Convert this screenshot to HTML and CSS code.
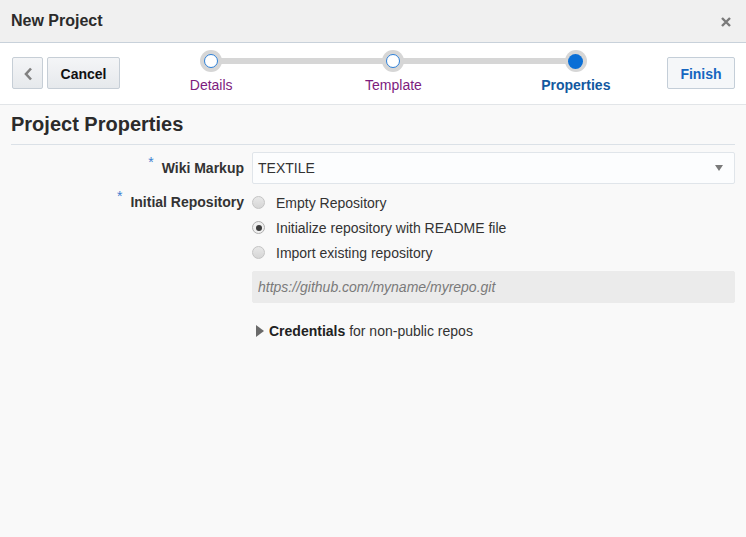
FILE: index.html
```html
<!DOCTYPE html>
<html lang="en">
<head>
<meta charset="utf-8">
<title>New Project</title>
<link rel="stylesheet" href="styles.css">
</head>
<body>
<div class="dialog">
  <header class="titlebar">
    <h1 class="title">New Project</h1>
    <button class="close" aria-label="Close">
      <svg width="10" height="10" viewBox="0 0 10 10"><path d="M1 1L9 9M9 1L1 9" stroke="#7a7a7a" stroke-width="2.4" stroke-linecap="butt"/></svg>
    </button>
  </header>

  <div class="toolbar">
    <div class="nav-left">
      <button class="btn btn-back" aria-label="Back">
        <svg width="10" height="14" viewBox="0 0 10 14"><path d="M8 1.5L3 7l5 5.5" fill="none" stroke="#808080" stroke-width="2.6"/></svg>
      </button>
      <button class="btn btn-cancel">Cancel</button>
    </div>
    <ol class="stepper">
      <li class="step"><span class="dot"><span class="inner"></span></span><span class="step-label">Details</span></li>
      <li class="step"><span class="dot"><span class="inner"></span></span><span class="step-label">Template</span></li>
      <li class="step active"><span class="dot"><span class="inner"></span></span><span class="step-label">Properties</span></li>
    </ol>
    <button class="btn btn-finish">Finish</button>
  </div>

  <main class="content">
    <h2 class="section-title">Project Properties</h2>
    <div class="form">
      <div class="form-row row-center">
        <label class="form-label"><span class="req">*</span>Wiki Markup</label>
        <div class="field">
          <div class="select"><span class="select-value">TEXTILE</span><span class="caret"></span></div>
        </div>
      </div>
      <div class="form-row row-top">
        <label class="form-label label-radio"><span class="req">*</span>Initial Repository</label>
        <div class="field">
          <label class="radio-row"><input type="radio" name="repo" class="radio"><span>Empty Repository</span></label>
          <label class="radio-row"><input type="radio" name="repo" class="radio" checked><span>Initialize repository with README file</span></label>
          <label class="radio-row"><input type="radio" name="repo" class="radio"><span>Import existing repository</span></label>
          <input class="url-input" type="text" placeholder="https://github.com/myname/myrepo.git">
          <div class="disclosure"><span class="tri"></span><span><b>Credentials</b> for non-public repos</span></div>
        </div>
      </div>
    </div>
  </main>
</div>
</body>
</html>
```

FILE: styles.css
```css
* { box-sizing: border-box; }
html, body { margin: 0; padding: 0; }
body {
  background: #f9f9f9;
  font-family: "Liberation Sans", Arial, sans-serif;
  font-size: 14px;
  color: #333;
  width: 746px;
  height: 537px;
  overflow: hidden;
}
.titlebar {
  height: 43px;
  background: #f0f0f0;
  border-bottom: 1px solid #c8d1da;
  display: flex;
  align-items: center;
  justify-content: space-between;
  padding: 0 15px 1px 11px;
}
.title {
  margin: 0;
  font-size: 16px;
  font-weight: bold;
  color: #2b2b2b;
}
.close {
  border: 0;
  background: none;
  padding: 0;
  width: 10px;
  height: 10px;
  display: flex;
  margin-top: 2px;
}
.toolbar {
  height: 62px;
  background: #fff;
  border-bottom: 1px solid #e2e5e8;
  display: flex;
  align-items: flex-start;
  padding: 0 11px 0 12px;
}
.nav-left {
  display: flex;
  gap: 4px;
  margin-top: 14px;
}
.btn {
  height: 32px;
  border: 1px solid #c6ced6;
  border-radius: 2px;
  background: linear-gradient(#f4f5f7, #e6e9ec);
  font-family: "Liberation Sans", Arial, sans-serif;
  font-size: 14px;
  font-weight: bold;
  color: #111;
  padding: 2px 0 0;
  display: flex;
  align-items: center;
  justify-content: center;
}
.btn-back { width: 31px; padding-left: 1px; }
.btn-cancel { width: 73px; }
.btn-finish {
  width: 68px;
  margin-top: 14px;
  color: #1666c0;
  background: #f5f7f9;
  border-color: #c4ced8;
}
.stepper {
  flex: 1;
  list-style: none;
  margin: 0;
  padding: 0;
  display: grid;
  grid-template-columns: repeat(3, 1fr);
  position: relative;
  height: 61px;
}
.stepper::before {
  content: "";
  position: absolute;
  left: 16.667%;
  right: 16.667%;
  top: 15px;
  height: 6px;
  background: #d6d6d6;
}
.step {
  display: flex;
  flex-direction: column;
  align-items: center;
  position: relative;
}
.dot {
  margin-top: 7px;
  width: 22px;
  height: 22px;
  border-radius: 50%;
  background: #d6d6d6;
  display: flex;
  align-items: center;
  justify-content: center;
}
.inner {
  width: 14px;
  height: 14px;
  border-radius: 50%;
  background: #fff;
  border: 1.5px solid #2d80d8;
}
.active .inner {
  width: 15px;
  height: 15px;
  background: #0b6fd6;
  border: 0;
}
.step-label {
  margin-top: 5px;
  line-height: 16px;
  color: #7d1b7e;
}
.active .step-label {
  color: #12589f;
  font-weight: bold;
}
.content {
  padding: 0 11px;
}
.section-title {
  margin: 0;
  padding: 7px 0 8px;
  font-size: 20px;
  line-height: 24px;
  font-weight: bold;
  color: #2b2b2b;
  border-bottom: 1px solid #dbe1e7;
}
.form {
  padding-top: 7px;
}
.form-row {
  display: flex;
  gap: 8px;
}
.row-center { align-items: center; }
.row-top { align-items: flex-start; margin-top: 6px; }
.form-label {
  width: 233px;
  flex: none;
  text-align: right;
  font-weight: bold;
  color: #333;
  line-height: 18px;
}
.label-radio { line-height: 25px; }
.req {
  color: #3d80d0;
  font-weight: normal;
  line-height: 0;
  vertical-align: 6px;
  margin-right: 8px;
}
.field { flex: 1; }
.select {
  height: 32px;
  background: #fcfdfe;
  border: 1px solid #e0e5ea;
  border-radius: 2px;
  display: flex;
  align-items: center;
  justify-content: space-between;
  padding: 0 11px 0 5px;
  color: #333;
}
.caret {
  width: 0;
  height: 0;
  border-left: 4.5px solid transparent;
  border-right: 4.5px solid transparent;
  border-top: 6px solid #7a7a7a;
}
.radio-row {
  display: flex;
  align-items: center;
  height: 25px;
  gap: 11px;
}
.radio {
  -webkit-appearance: none;
  appearance: none;
  margin: 0;
  width: 13px;
  height: 13px;
  border-radius: 50%;
  border: 1px solid #c4c4c4;
  background: linear-gradient(#e8e8e8, #d6d6d6);
  display: inline-flex;
  align-items: center;
  justify-content: center;
}
.radio:checked {
  background: #f0f0f0;
  border-color: #b0b0b0;
}
.radio:checked::after {
  content: "";
  width: 6px;
  height: 6px;
  border-radius: 50%;
  background: #3c3c3c;
}
.url-input {
  display: block;
  width: 100%;
  height: 32px;
  margin-top: 6px;
  border: 1px solid #ebebeb;
  background: #ebebeb;
  border-radius: 2px;
  padding: 0 5px;
  font-family: "Liberation Sans", Arial, sans-serif;
  font-size: 14px;
  font-style: italic;
  color: #333;
}
.url-input::placeholder { color: #7a7a7a; }
.disclosure {
  margin-top: 18px;
  display: flex;
  align-items: center;
  line-height: 20px;
  padding-left: 4px;
  gap: 5px;
}
.tri {
  width: 0;
  height: 0;
  border-top: 6px solid transparent;
  border-bottom: 6px solid transparent;
  border-left: 8px solid #6a6a6a;
}
.disclosure b { color: #222; }
```
